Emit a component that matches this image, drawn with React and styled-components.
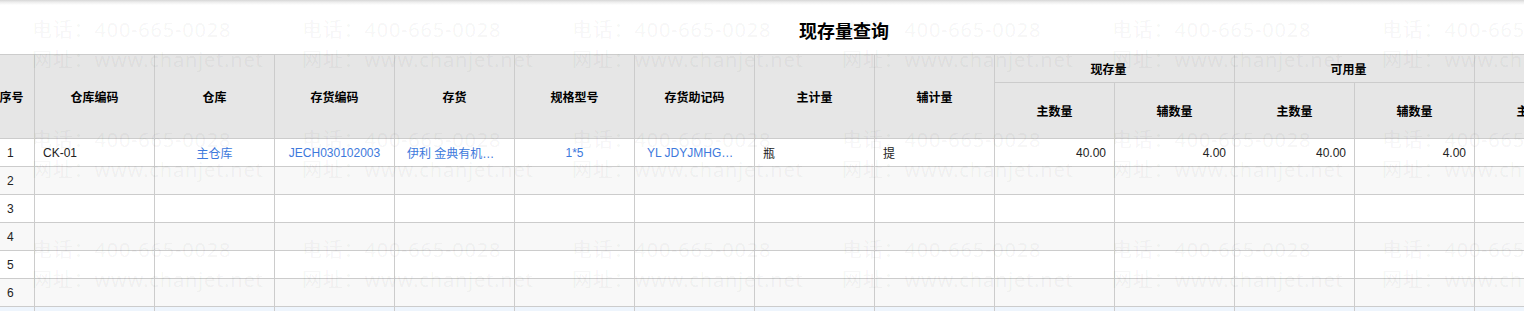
import React from "react";
import styled, { createGlobalStyle } from "styled-components";

const GlobalStyle = createGlobalStyle`
  html, body {
    margin: 0;
    padding: 0;
    background: #ffffff;
  }
  body {
    font-family: "Liberation Sans", "Noto Sans CJK SC", Arial, sans-serif;
    font-size: 12px;
    color: #222;
  }
`;

const Page = styled.div`
  position: relative;
  width: 1524px;
  height: 311px;
  overflow: hidden;
`;

const TopShadow = styled.div`
  height: 5px;
  background: linear-gradient(to bottom, #d6d6d6 0%, #ececec 40%, #ffffff 100%);
`;

const TitleBar = styled.div`
  height: 49px;
  display: flex;
  align-items: center;
  justify-content: center;
  padding-left: 164px;
`;

const Title = styled.h1`
  margin: 0;
  font-family: "Noto Sans CJK SC", sans-serif;
  font-size: 18px;
  font-weight: 700;
  color: #000;
  line-height: 1;
`;

const TableViewport = styled.div`
  overflow: hidden;
`;

const Grid = styled.table`
  margin-left: -12px;
  border-collapse: collapse;
  table-layout: fixed;
  width: ${(p) => p.$width}px;
`;

const HeadCell = styled.th`
  background: #e6e6e6;
  border: 1px solid #cccccc;
  font-family: "Noto Sans CJK SC", sans-serif;
  font-weight: 700;
  font-size: 12px;
  color: #000;
  text-align: center;
  padding: ${(p) => (p.$group ? "0 12px 0 0" : "0")};
  white-space: nowrap;
  overflow: hidden;
`;

const GroupRow = styled.tr`
  height: 28px;
`;

const SubRow = styled.tr`
  height: 56px;
`;

const BodyRow = styled.tr`
  height: 28px;
  background: ${(p) => (p.$active ? "#eef5fd" : p.$odd ? "#f8f8f8" : "#ffffff")};
`;

const Cell = styled.td`
  border: 1px solid #cccccc;
  padding: ${(p) => (p.$clip ? "0 16px 0 12px" : p.$seq ? "0 0 0 18px" : "0 8px")};
  text-align: ${(p) => p.$align || "left"};
  color: ${(p) => (p.$link ? "#3d79dc" : "#222")};
  white-space: nowrap;
  overflow: hidden;
  text-overflow: ellipsis;
  font-size: 12px;
`;

const Watermark = styled.div`
  position: absolute;
  top: 15px;
  left: 32px;
  display: grid;
  grid-template-columns: repeat(6, 270px);
  grid-auto-rows: 110px;
  pointer-events: none;
`;

const MarkItem = styled.div`
  font-family: "Noto Sans", "Noto Sans CJK SC", sans-serif;
  font-size: 20px;
  line-height: 30px;
  letter-spacing: 0.8px;
  color: rgba(0, 0, 0, 0.05);
  white-space: nowrap;
`;

const columns = [
  { key: "seq", title: "序号", width: 46 },
  { key: "whCode", title: "仓库编码", width: 120 },
  { key: "wh", title: "仓库", width: 120, align: "center", link: true },
  { key: "invCode", title: "存货编码", width: 120, align: "center", link: true },
  { key: "inv", title: "存货", width: 120, link: true, clip: true },
  { key: "spec", title: "规格型号", width: 120, align: "center", link: true },
  { key: "mnemonic", title: "存货助记码", width: 120, link: true, clip: true },
  { key: "unit", title: "主计量", width: 120 },
  { key: "subUnit", title: "辅计量", width: 120 },
];

const groups = [
  { title: "现存量", keys: ["onHandMain", "onHandSub"] },
  { title: "可用量", keys: ["availMain", "availSub"] },
  { title: "预计可用量", keys: ["planMain", "planSub"] },
];

const rows = [
  {
    seq: 1,
    whCode: "CK-01",
    wh: "主仓库",
    invCode: "JECH030102003",
    inv: "伊利 金典有机纯牛奶250ml",
    spec: "1*5",
    mnemonic: "YL JDYJMHGYNN250ML",
    unit: "瓶",
    subUnit: "提",
    onHandMain: "40.00",
    onHandSub: "4.00",
    availMain: "40.00",
    availSub: "4.00",
    planMain: "40.00",
    planSub: "4.00",
  },
  { seq: 2 },
  { seq: 3 },
  { seq: 4 },
  { seq: 5 },
  { seq: 6 },
  { seq: 7 },
];

const marks = Array.from({ length: 18 });

const App = () => {
  const tableWidth = columns.reduce((s, c) => s + c.width, 0) + groups.length * 240;

  return (
    <Page>
      <GlobalStyle />
      <TopShadow />
      <TitleBar>
        <Title>现存量查询</Title>
      </TitleBar>
      <TableViewport>
        <Grid $width={tableWidth}>
          <colgroup>
            {columns.map((c) => (
              <col key={c.key} style={{ width: c.width }} />
            ))}
            {groups.map((g) =>
              g.keys.map((k) => <col key={k} style={{ width: 120 }} />)
            )}
          </colgroup>
          <thead>
            <GroupRow>
              {columns.map((c) => (
                <HeadCell key={c.key} rowSpan={2}>
                  {c.title}
                </HeadCell>
              ))}
              {groups.map((g) => (
                <HeadCell key={g.title} colSpan={2} $group>
                  {g.title}
                </HeadCell>
              ))}
            </GroupRow>
            <SubRow>
              {groups.map((g) => (
                <React.Fragment key={g.title}>
                  <HeadCell>主数量</HeadCell>
                  <HeadCell>辅数量</HeadCell>
                </React.Fragment>
              ))}
            </SubRow>
          </thead>
          <tbody>
            {rows.map((r, i) => (
              <BodyRow key={r.seq} $odd={i % 2 === 1} $active={i === 6}>
                {columns.map((c) => (
                  <Cell
                    key={c.key}
                    $align={c.align}
                    $link={c.link}
                    $clip={c.clip}
                    $seq={c.key === "seq"}
                  >
                    {r[c.key]}
                  </Cell>
                ))}
                {groups.map((g) =>
                  g.keys.map((k) => (
                    <Cell key={k} $align="right">
                      {r[k]}
                    </Cell>
                  ))
                )}
              </BodyRow>
            ))}
          </tbody>
        </Grid>
      </TableViewport>
      <Watermark>
        {marks.map((_, i) => (
          <MarkItem key={i}>
            <div>电话：400-665-0028</div>
            <div>网址：www.chanjet.net</div>
          </MarkItem>
        ))}
      </Watermark>
    </Page>
  );
};

export default App;
